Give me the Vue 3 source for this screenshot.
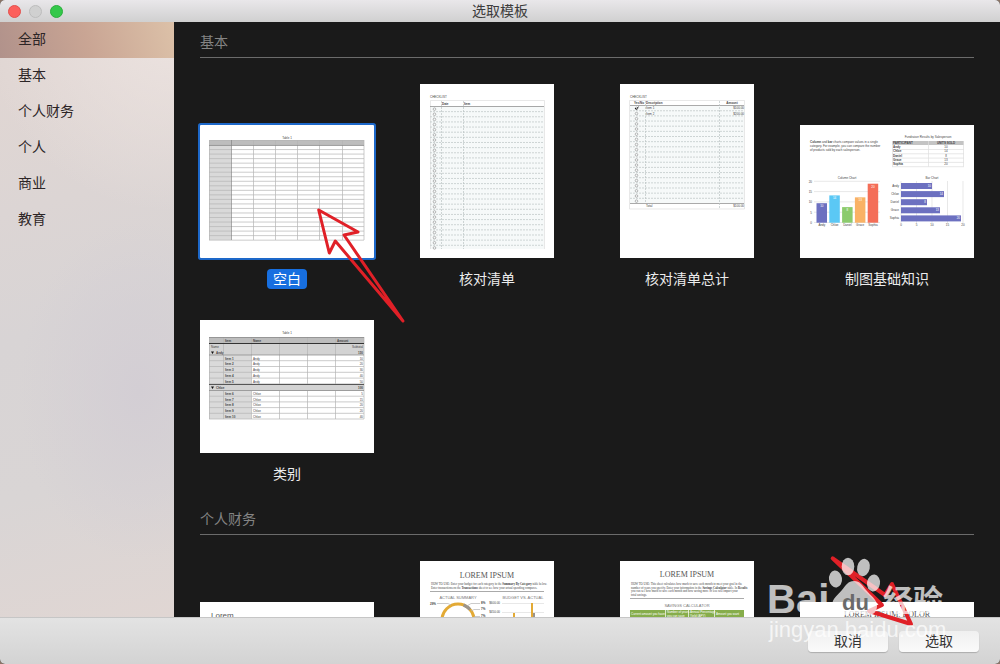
<template>
  <div class="window">
    <header class="titlebar">
      <div class="lights">
        <button class="light close" aria-label="关闭"></button>
        <button class="light minimize" aria-label="最小化" disabled></button>
        <button class="light zoom" aria-label="缩放"></button>
      </div>
      <h1>选取模板</h1>
    </header>

    <div class="body">
      <nav class="sidebar">
        <button
          v-for="name in categories"
          :key="name"
          class="category"
          :class="{ active: name === activeCategory }"
          @click="activeCategory = name"
        >{{ name }}</button>
      </nav>

      <main class="content">
        <section v-for="section in sections" :key="section.title" class="section">
          <h2>{{ section.title }}</h2>
          <div class="grid">
            <button
              v-for="item in section.items"
              :key="item.kind"
              class="template"
              :class="{ selected: item.kind === selected }"
              @click="selected = item.kind"
            >
              <!-- Пустая таблица -->
              <svg v-if="item.kind === 'blank'" class="thumb" width="174" height="133" viewBox="0 0 174 133">
                <text x="87" y="14" class="t3 mid">Table 1</text>
                <rect x="9" y="15" width="155" height="5" fill="#bdbdbd" />
                <rect x="9" y="20" width="22" height="95" fill="#d9d9d9" />
                <path v-for="n in 22" :key="n" :d="`M9 ${15.5 + n * 4.53}H164`" class="line" />
                <path d="M9.5 15V115M53.5 15V115M75.5 15V115M97.5 15V115M119.5 15V115M142.5 15V115M164 15V115M9 15.5H164" class="line" />
                <path d="M31.5 15V115M9 20.5H164" class="line dark" />
              </svg>

              <!-- Чек-лист -->
              <svg v-else-if="item.kind === 'checklist'" class="thumb" width="134" height="174" viewBox="0 0 134 174">
                <text x="10" y="14" class="t3">CHECKLIST</text>
                <rect x="10" y="22" width="114" height="143" fill="#f6f9f9" />
                <path d="M10.5 165V16.5H124.5V165" class="faint" />
                <path d="M10 22.5H124" class="line dark" />
                <text x="22" y="21" class="t3 bold">Date</text>
                <text x="44" y="21" class="t3 bold">Item</text>
                <g v-for="n in 28" :key="n">
                  <circle cx="14.5" :cy="20 + n * 5.14" r="1.3" class="ring" />
                  <path v-if="n < 28" :d="`M10 ${22.5 + n * 5.14}H124`" class="dash" />
                </g>
                <path d="M21.5 17V165M43.5 17V165" class="dash" />
              </svg>

              <!-- Чек-лист с итогом -->
              <svg v-else-if="item.kind === 'total'" class="thumb" width="134" height="174" viewBox="0 0 134 174">
                <text x="10" y="14" class="t3">CHECKLIST</text>
                <rect x="10" y="22" width="114" height="97" fill="#f6f9f9" />
                <path d="M9.5 16.5H124.5V125H9.5Z" class="faint" />
                <path d="M10 21.5H124M10 119.5H124" class="line dark" />
                <text x="14" y="20" class="t3 bold">Yes/No</text>
                <text x="26" y="20" class="t3 bold">Description</text>
                <text x="112" y="20" class="t3 bold mid">Amount</text>
                <g v-for="n in 19" :key="n">
                  <circle cx="16.5" :cy="19.3 + n * 5.15" r="1.3" class="ring" />
                  <path v-if="n < 19" :d="`M10 ${21.6 + n * 5.15}H124`" class="dash" />
                </g>
                <path d="M15 24L16.4 25.4L18.5 22.6" fill="none" stroke="#222" />
                <path d="M25.5 17V119M99.5 17V125" class="dash" />
                <text x="26" y="25" class="t3">Item 1</text>
                <text x="26" y="31" class="t3">Item 2</text>
                <text x="124" y="25" class="t3 end">$100.00</text>
                <text x="124" y="31" class="t3 end">$200.00</text>
                <text x="26" y="123" class="t3">Total</text>
                <text x="124" y="123" class="t3 end">$100.00</text>
              </svg>

              <!-- Основы диаграмм -->
              <svg v-else-if="item.kind === 'charts'" class="thumb" width="174" height="133" viewBox="0 0 174 133">
                <text x="10" y="18" class="t3"><tspan class="bold">Column</tspan> and <tspan class="bold">bar</tspan> charts compare values in a single</text>
                <text x="10" y="22" class="t3">category. For example, you can compare the number</text>
                <text x="10" y="26" class="t3">of products sold by each salesperson.</text>
                <text x="128" y="13" class="t3 mid">Fundraiser Results by Salesperson</text>
                <rect x="92" y="16" width="72" height="4" fill="#c4c4c4" />
                <text x="93" y="19" class="t3 bold">PARTICIPANT</text>
                <text x="146" y="19" class="t3 bold mid">UNITS SOLD</text>
                <g v-for="(row, i) in sales" :key="row.name">
                  <path :d="`M92 ${24.5 + i * 4.3}H164`" class="faint" />
                  <text x="93" :y="23 + i * 4.3" class="t3 bold">{{ row.name }}</text>
                  <text x="146" :y="23 + i * 4.3" class="t3 mid">{{ row.units }}</text>
                </g>
                <path d="M92.5 16V41.5M128.5 16V41.5M163.5 16V41.5" class="faint" />

                <text x="47" y="54" class="t3 mid">Column Chart</text>
                <g v-for="n in 5" :key="'grid' + n">
                  <path :d="`M14 ${46 + n * 10.3}H80`" class="faint" />
                  <text x="12" :y="47.5 + n * 10.3" class="t3 end">{{ 25 - n * 5 }}</text>
                </g>
                <g v-for="(row, i) in sales" :key="'col' + i">
                  <rect :x="16.5 + i * 12.8" :y="97.7 - row.units * 1.95" width="10.5" :height="row.units * 1.95" :fill="row.color" />
                  <text :x="21.8 + i * 12.8" :y="101.5 - row.units * 1.95" class="t3 mid white">{{ row.units }}</text>
                  <text :x="21.8 + i * 12.8" y="101" class="t3 mid">{{ row.name }}</text>
                </g>

                <text x="132" y="54" class="t3 mid">Bar Chart</text>
                <g v-for="n in 5" :key="'axis' + n">
                  <path :d="`M${85.5 + n * 15.5} 56V98`" class="faint" />
                  <text :x="85.5 + n * 15.5" y="101" class="t3 mid">{{ n * 5 - 5 }}</text>
                </g>
                <g v-for="(row, i) in sales" :key="'bar' + i">
                  <rect x="101" :y="58 + i * 8.1" :width="row.bar" height="6" fill="#6c70c0" />
                  <text :x="100 + row.bar" :y="62 + i * 8.1" class="t3 end white">{{ row.units }}</text>
                  <text x="99" :y="62 + i * 8.1" class="t3 end">{{ row.name }}</text>
                </g>
              </svg>

              <!-- Категории -->
              <svg v-else-if="item.kind === 'categories'" class="thumb" width="174" height="133" viewBox="0 0 174 133">
                <text x="87" y="14" class="t3 mid">Table 1</text>
                <rect x="9" y="17" width="155" height="6" fill="#bdbdbd" />
                <rect x="9" y="23" width="155" height="12" fill="#d3d3d3" />
                <rect x="9" y="35" width="42" height="64" fill="#dadada" />
                <rect x="9" y="64" width="155" height="7" fill="#d3d3d3" />
                <path d="M9.5 17V99M23.5 17V64M23.5 71V99M51.5 17V64M51.5 71V99M79.5 17V64M79.5 71V99M107.5 17V64M107.5 71V99M135.5 17V64M135.5 71V99M164 17V99" class="line" />
                <path d="M9 23.5H164M9 64.5H164" stroke="#333" />
                <path d="M9 17.5H164M9 35H164M9 70.5H164" class="line dark" />
                <text x="25" y="22" class="t3 bold">Item</text>
                <text x="53" y="22" class="t3 bold">Name</text>
                <text x="137" y="22" class="t3 bold">Amount</text>
                <text x="11" y="28" class="t3">Name</text>
                <text x="163" y="28" class="t3 end">Subtotal</text>
                <path d="M11 31.5H14L12.5 34ZM11 66.5H14L12.5 69Z" fill="#111" />
                <text x="16" y="34" class="t3 bold">Andy</text>
                <text x="163" y="34" class="t3 bold end">150</text>
                <text x="16" y="69" class="t3 bold">Chloe</text>
                <text x="163" y="69" class="t3 bold end">100</text>
                <g v-for="(amount, i) in amounts" :key="i">
                  <path :d="`M9 ${rowTop(i) + 5.7}H164`" class="line" />
                  <text x="25" :y="rowTop(i) + 4.5" class="t3 bold">Item {{ i + 1 }}</text>
                  <text x="53" :y="rowTop(i) + 4.5" class="t3">{{ i < 5 ? 'Andy' : 'Chloe' }}</text>
                  <text x="163" :y="rowTop(i) + 4.5" class="t3 end">{{ amount }}</text>
                </g>
              </svg>

              <svg v-else-if="item.kind === 'lorem'" class="thumb" width="174" height="133" viewBox="0 0 174 133">
                <text x="11" y="16" class="t8 sans">Lorem</text>
              </svg>

              <!-- Бюджет -->
              <svg v-else-if="item.kind === 'budget'" class="thumb" width="134" height="174" viewBox="0 0 134 174">
                <text x="67" y="17" class="t8 mid">LOREM IPSUM</text>
                <text x="11" y="24" class="t3 serif">HOW TO USE: Enter your budget for each category in the <tspan class="bold">Summary By Category</tspan> table below.</text>
                <text x="11" y="28" class="t3 serif">Enter transactions on the <tspan class="bold">Transactions</tspan> sheet to see how your actual spending compares.</text>
                <path d="M10 30.5H124" class="line dark" />
                <text x="38" y="38" class="t4 mid">ACTUAL SUMMARY</text>
                <text x="103" y="38" class="t4 mid">BUDGET VS. ACTUAL</text>
                <circle cx="38" cy="59" r="16" fill="none" stroke="#e3aa35" stroke-width="3" />
                <path d="M43.5 44A16 16 0 0 1 50 48.5" fill="none" stroke="#9b948c" stroke-width="3" />
                <path d="M17 42.5H28L31 44M60 42.5H51L47 45M60 48.5H54L51 50M60 55.5H54" class="line" />
                <text x="10" y="44" class="t3 bold">29%</text>
                <text x="61" y="43" class="t3 bold">8%</text>
                <text x="61" y="49" class="t3 bold">7%</text>
                <text x="61" y="56" class="t3 bold">7%</text>
                <text x="80" y="43" class="t3 end">$600.00</text>
                <text x="80" y="52" class="t3 end">$450.00</text>
                <path d="M82 42.5H124M82 51.5H124" class="faint" />
                <path d="M93 52h2v8h-2zM97 56h1v4h-1zM106 56h1v4h-1zM111 42h2v18h-2z" fill="#e3aa35" />
                <path d="M113 52h2v8h-2z" fill="#9b948c" />
              </svg>

              <!-- Накопления -->
              <svg v-else-if="item.kind === 'savings'" class="thumb" width="134" height="174" viewBox="0 0 134 174">
                <text x="67" y="16" class="t8 mid">LOREM IPSUM</text>
                <text x="11" y="24" class="t3 serif">HOW TO USE: This sheet calculates how much to save each month to meet your goal in the</text>
                <text x="11" y="28" class="t3 serif">number of years you specify. Enter your information in the <tspan class="bold">Savings Calculator</tspan> table. In <tspan class="bold">Results</tspan></text>
                <text x="11" y="31" class="t3 serif">you can see how much to save each month and how saving more or less will impact your</text>
                <text x="11" y="35" class="t3 serif">total savings.</text>
                <path d="M10 37.5H124" class="line dark" />
                <text x="67" y="46" class="t4 mid">SAVINGS CALCULATOR</text>
                <rect x="10" y="49" width="114" height="12" fill="#86ad4b" />
                <path d="M45.5 49V61M68.5 49V61M94.5 49V61" stroke="#dce8cb" />
                <text x="11" y="54" class="t3 white">Current amount you have</text>
                <text x="47" y="52" class="t3 white">Number of years</text>
                <text x="47" y="56" class="t3 white">you can save</text>
                <text x="70" y="52" class="t3 white">Annual Percentage</text>
                <text x="70" y="56" class="t3 white">Yield (APY)</text>
                <text x="96" y="54" class="t3 white">Amount you want</text>
              </svg>

              <svg v-else class="thumb" width="174" height="133" viewBox="0 0 174 133">
                <text x="87" y="15" class="t8 mid">LOREM IPSUM: DOLOR</text>
              </svg>

              <span class="label">{{ item.label }}</span>
            </button>
          </div>
        </section>
      </main>
    </div>

    <footer class="footer">
      <button class="btn">取消</button>
      <button class="btn">选取</button>
    </footer>

    <svg class="pointer" width="120" height="130" viewBox="300 200 120 130" aria-hidden="true">
      <path d="M318.7 210L358 232L344 235L403 321L335.3 241L329.3 253Z" class="arrow" />
    </svg>

    <svg class="watermark" width="240" height="124" viewBox="0 0 240 124" aria-hidden="true">
      <path d="M72.7 18.3L125 55L132 44L151 84L109 71L122 65Z" class="arrow thick" />
      <g class="mark">
        <text x="7" y="73" class="brand">Bai</text>
        <ellipse cx="75.5" cy="39" rx="6.5" ry="8.5" transform="rotate(-8 75.5 39)" />
        <ellipse cx="88" cy="26.5" rx="6.3" ry="8.8" />
        <ellipse cx="103.5" cy="27.5" rx="6.3" ry="8.8" transform="rotate(12 103.5 27.5)" />
        <ellipse cx="113.5" cy="43" rx="6.5" ry="8.5" transform="rotate(8 113.5 43)" />
        <path d="M94 41C88 41 86 45 82 50C78 55 72 58 72 66C72 72 77 75 83 75C88 75 90 73 95 73C100 73 103 75 108 75C114 75 117 71 117 66C117 59 110 55 106 50C102 45 100 41 94 41Z" />
        <text x="123" y="71" class="brand-cn">经验</text>
        <text x="9" y="97" class="site">jingyan.baidu.com</text>
      </g>
      <text x="82" y="70" class="du">du</text>
    </svg>
  </div>
</template>

<script setup>
import { ref } from 'vue'

const categories = ['全部', '基本', '个人财务', '个人', '商业', '教育']
const activeCategory = ref('全部')
const selected = ref('blank')

const sections = [
  {
    title: '基本',
    items: [
      { kind: 'blank', label: '空白' },
      { kind: 'checklist', label: '核对清单' },
      { kind: 'total', label: '核对清单总计' },
      { kind: 'charts', label: '制图基础知识' },
      { kind: 'categories', label: '类别' }
    ]
  },
  {
    title: '个人财务',
    items: [
      { kind: 'lorem', label: '' },
      { kind: 'budget', label: '' },
      { kind: 'savings', label: '' },
      { kind: 'dolor', label: '' }
    ]
  }
]

const sales = [
  { name: 'Andy', units: 10, bar: 31, color: '#6c70c0' },
  { name: 'Chloe', units: 14, bar: 43, color: '#5bc8f5' },
  { name: 'Daniel', units: 8, bar: 26, color: '#8ccb6c' },
  { name: 'Grace', units: 13, bar: 39, color: '#f9b265' },
  { name: 'Sophia', units: 20, bar: 60, color: '#f46e58' }
]

const amounts = [10, 20, 30, 40, 50, 5, 15, 20, 20, 40]

// вторая группа начинается после строки заголовка
const rowTop = (i) => (i < 5 ? 35 + i * 5.8 : 70.5 + (i - 5) * 5.7)
</script>

<style>
body {
  margin: 0;
  background: #8b7466;
}
</style>

<style scoped>
.window {
  position: relative;
  display: flex;
  flex-direction: column;
  height: 100vh;
  overflow: hidden;
  border-radius: 5px;
  background: #1a1a1a;
  font-family: "Liberation Sans", "Noto Sans CJK SC", sans-serif;
  font-size: 14px;
}
button {
  font: inherit;
  border: none;
  padding: 0;
  background: none;
}
.titlebar {
  display: grid;
  grid-template-columns: 1fr auto 1fr;
  align-items: center;
  height: 22px;
  flex-shrink: 0;
  background: linear-gradient(#e9e7ea, #d0d0d0);
}
.titlebar h1 {
  margin: 0;
  font-size: 14px;
  font-weight: 400;
  line-height: 22px;
  color: #3c3c3c;
}
.lights {
  display: flex;
  gap: 8px;
  padding-left: 8px;
}
.light {
  box-sizing: border-box;
  width: 13px;
  height: 13px;
  border-radius: 50%;
}
.close {
  background: #fc605c;
  border: 1px solid #e2514d;
}
.minimize {
  background: #d0d0d0;
  border: 1px solid #bcbcbc;
}
.zoom {
  background: #34c84a;
  border: 1px solid #2bae3c;
}
.body {
  display: flex;
  flex: 1;
  min-height: 0;
}
.sidebar {
  width: 174px;
  flex-shrink: 0;
  background:
    radial-gradient(circle at 100% 0, #ece3e0 0, transparent 190px),
    radial-gradient(ellipse 120px 170px at 80% 62%, #d3ced4, transparent),
    linear-gradient(165deg, #e0d6d3 10%, #d8d4d5 50%, #d9d5d5 75%, #e0d6d3);
}
.category {
  display: block;
  box-sizing: border-box;
  width: 100%;
  height: 36px;
  padding: 0 18px 4px;
  text-align: left;
  color: #2c2526;
}
.category.active {
  background: linear-gradient(75deg, #b1928b, #c9a594 50%, #dcc1a8);
}
.content {
  flex: 1;
  min-width: 0;
  overflow: hidden;
  padding: 0 26px;
}
.section {
  padding-top: 10px;
}
.section + .section {
  padding-top: 25px;
}
.section h2 {
  margin: 0 0 26px;
  padding-bottom: 5px;
  border-bottom: 1px solid #6b6b6b;
  font-size: 14px;
  font-weight: 400;
  line-height: 20px;
  color: #848484;
}
.grid {
  display: grid;
  grid-template-columns: repeat(4, 174px);
  justify-content: space-between;
  row-gap: 31px;
}
.template {
  display: flex;
  flex-direction: column;
  align-items: center;
  justify-content: flex-end;
  gap: 11px;
}
.thumb {
  display: block;
  background: #fff;
}
.label {
  min-height: 20px;
  padding: 0 6px;
  border-radius: 4px;
  line-height: 20px;
  color: #ececec;
}
.selected .thumb {
  border-radius: 1px;
  box-shadow: 0 0 0 2px #1d68c9;
}
.selected .label {
  background: #176fe0;
  color: #fff;
}
.footer {
  display: flex;
  justify-content: flex-end;
  align-items: center;
  gap: 11px;
  box-sizing: border-box;
  height: 47px;
  flex-shrink: 0;
  padding: 0 21px;
  border-top: 1px solid #c6c6c6;
  background: linear-gradient(#e3e3e3, #d3d3d3);
}
.btn {
  width: 80px;
  height: 21px;
  border-radius: 4px;
  background: linear-gradient(#f0f0f0, #fafafa);
  box-shadow: 0 1px 1px rgba(0, 0, 0, 0.2);
  line-height: 21px;
  color: #333;
}

/* Рисунки миниатюр */
.t3 {
  font-size: 3px;
  fill: #444;
}
.t4 {
  font-size: 4px;
  fill: #777;
}
.t8 {
  font-family: "Liberation Serif", serif;
  font-size: 8px;
  fill: #555;
}
.serif {
  font-family: "Liberation Serif", serif;
}
.sans {
  font-family: "Liberation Sans", sans-serif;
}
.bold {
  font-weight: 700;
}
.mid {
  text-anchor: middle;
}
.end {
  text-anchor: end;
}
.white {
  fill: #fff;
}
.line,
.faint,
.dash,
.ring {
  fill: none;
  stroke: #b4b4b4;
  stroke-width: 0.7;
}
.dark {
  stroke: #858585;
}
.faint {
  stroke: #dedede;
}
.dash {
  stroke: #bcc4c4;
  stroke-dasharray: 2 1;
}
.ring {
  stroke: #999;
}

/* Стрелки и водяной знак поверх окна */
.pointer,
.watermark {
  position: absolute;
  pointer-events: none;
}
.pointer {
  left: 300px;
  top: 200px;
}
.watermark {
  right: 0;
  bottom: 0;
}
.arrow {
  fill: none;
  stroke: #e02027;
  stroke-width: 3;
  stroke-linejoin: round;
}
.thick {
  stroke-width: 4;
}
.mark {
  fill: #fff;
  opacity: 0.72;
}
.brand {
  font-size: 40px;
  font-weight: 700;
}
.brand-cn {
  font-size: 30px;
  font-weight: 700;
}
.site {
  font-size: 22px;
}
.du {
  font-size: 22px;
  font-weight: 700;
  fill: #6a6a6a;
}
</style>
